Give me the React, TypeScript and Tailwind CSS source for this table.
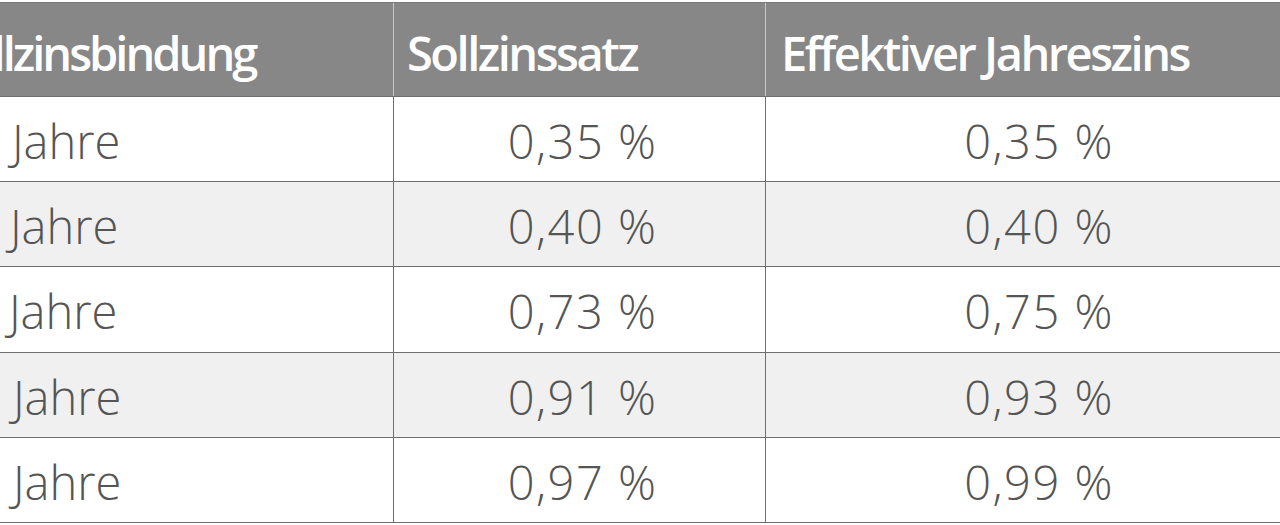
import React from "react";

const rows = [
  { years: "5", jm: "ml-[24px]", a: "0,35 %", b: "0,35 %", bg: "bg-white" },
  { years: "10", jm: "ml-[22px]", a: "0,40 %", b: "0,40 %", bg: "bg-[#f0f0f0]" },
  { years: "15", jm: "ml-[21px]", a: "0,73 %", b: "0,75 %", bg: "bg-white" },
  { years: "20", jm: "ml-[25px]", a: "0,91 %", b: "0,93 %", bg: "bg-[#f0f0f0]" },
  { years: "25", jm: "ml-[25px]", a: "0,97 %", b: "0,99 %", bg: "bg-white" },
];

const heights = ["h-[85px]", "h-[85px]", "h-[86px]", "h-[85px]", "h-[85px]"];

export default function App() {
  return (
    <div
      className="w-[1280px] h-[525px] overflow-hidden bg-white"
      style={{ fontFamily: '"Open Sans", "Noto Sans", sans-serif' }}
    >
      <div className="mt-[2px] ml-[-200px] w-[1600px] border-t border-[#7a7a7a]">
        <div className="grid grid-cols-[594px_372px_634px] h-[94px] bg-[#878787] border-b border-[#6f6f6f] text-white font-semibold text-[47px] tracking-[-2.5px]">
          <div className="border-r border-[#c8c8c8] flex items-center pl-[144px] pt-[7px] tracking-[-3px]">Sollzinsbindung</div>
          <div className="border-r border-[#c8c8c8] flex items-center pl-[13px] pt-[7px]">Sollzinssatz</div>
          <div className="flex items-center pl-[15px] pt-[7px]">Effektiver Jahreszins</div>
        </div>
        {rows.map((r, i) => (
          <div
            key={i}
            className={`grid grid-cols-[594px_372px_634px] ${heights[i]} ${r.bg} border-b border-[#6f6f6f] text-[#555555] font-light text-[47px]`}
          >
            <div className="border-r border-[#6f6f6f] flex items-center pl-[140px] pt-[4px]">
              <span className="inline-block w-[48px] text-right">{r.years}</span>
              <span className={r.jm}>Jahre</span>
            </div>
            <div className="border-r border-[#6f6f6f] flex items-center justify-center pl-[6px] pt-[4px] tracking-[1.5px]">{r.a}</div>
            <div className="flex items-center pt-[4px] tracking-[1.5px]">
              <span className="w-[546px] text-center">{r.b}</span>
            </div>
          </div>
        ))}
      </div>
    </div>
  );
}
